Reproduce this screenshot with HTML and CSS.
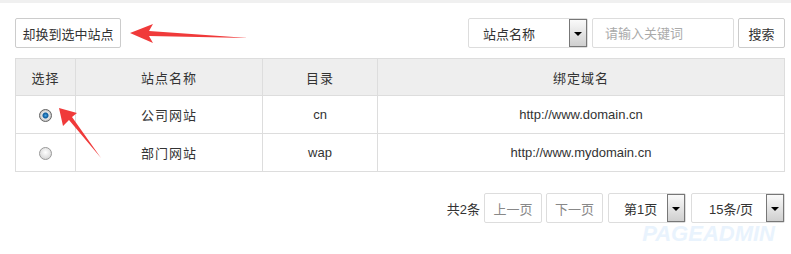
FILE: index.html
```html
<!DOCTYPE html>
<html lang="zh-CN">
<head>
    <meta charset="UTF-8">
    <title>站点管理</title>
    <link rel="stylesheet" href="styles.css">
</head>
<body>
    <div class="page">
        <div class="toolbar">
            <button class="btn btn-switch">却换到选中站点</button>
            <div class="search">
                <div class="select select-field">
                    <span class="select-text">站点名称</span>
                    <span class="select-arrow"></span>
                </div>
                <input class="keyword" type="text" placeholder="请输入关键词">
                <button class="btn btn-search">搜索</button>
            </div>
        </div>

        <table class="site-table">
            <thead>
                <tr>
                    <th class="col-check">选择</th>
                    <th class="col-name">站点名称</th>
                    <th class="col-dir">目录</th>
                    <th>绑定域名</th>
                </tr>
            </thead>
            <tbody>
                <tr>
                    <td><span class="radio checked"></span></td>
                    <td class="cn">公司网站</td>
                    <td>cn</td>
                    <td>http://www.domain.cn</td>
                </tr>
                <tr>
                    <td><span class="radio"></span></td>
                    <td class="cn">部门网站</td>
                    <td>wap</td>
                    <td>http://www.mydomain.cn</td>
                </tr>
            </tbody>
        </table>

        <div class="pager">
            <span class="total">共2条</span>
            <button class="btn btn-page">上一页</button>
            <button class="btn btn-page">下一页</button>
            <div class="select select-page">
                <span class="select-text">第1页</span>
                <span class="select-arrow"></span>
            </div>
            <div class="select select-size">
                <span class="select-text">15条/页</span>
                <span class="select-arrow"></span>
            </div>
        </div>
        <div class="watermark">PAGEADMIN</div>

        <!-- annotation arrows -->
        <svg class="arrow arrow-top" viewBox="0 0 120 26" xmlns="http://www.w3.org/2000/svg">
            <polygon points="0,14 23,5 19,12 118,19 19,17 23,24" fill="#f03a3a"/>
        </svg>
        <svg class="arrow arrow-radio" viewBox="0 0 46 56" xmlns="http://www.w3.org/2000/svg">
            <polygon points="1,1 19,6 14,10 43,51 11,13 5,19" fill="#f03a3a"/>
        </svg>
    </div>
</body>
</html>
```

FILE: styles.css
```css
* {
    box-sizing: border-box;
}
body {
    margin: 0;
    padding: 0;
    font-family: "Liberation Sans", Arial, "Noto Sans CJK SC", sans-serif;
    font-size: 13px;
    color: #333;
    background-color: #fff;
    border-top: 3px solid #f0f0f0;
}
.page {
    position: relative;
    width: 770px;
    margin-left: 15px;
    padding-top: 15px;
}
.toolbar {
    display: flex;
    justify-content: space-between;
    align-items: center;
    height: 30px;
    margin-bottom: 10px;
}
.search {
    display: flex;
    gap: 4px;
}
.btn {
    height: 30px;
    padding: 0 11px;
    border: 1px solid #ccc;
    border-radius: 2px;
    background-color: #fff;
    font-family: inherit;
    font-size: 13px;
    color: #333;
}
.btn-switch {
    width: 106px;
    padding: 0;
}
.btn-search {
    width: 47px;
    padding: 0;
}
.select {
    display: flex;
    align-items: stretch;
    height: 30px;
    border: 1px solid #ddd;
    border-radius: 2px;
    background-color: #fff;
}
.select-text {
    flex: 1;
    display: flex;
    align-items: center;
    padding-left: 14px;
}
.select-arrow {
    position: relative;
    width: 18px;
    border: 1px solid #777;
    background: linear-gradient(#fafafa, #cfcfcf);
}
.select-arrow::after {
    content: "";
    position: absolute;
    left: 4px;
    top: 12px;
    border-left: 4px solid transparent;
    border-right: 4px solid transparent;
    border-top: 4px solid #000;
}
.select-field {
    width: 120px;
}
.keyword {
    width: 142px;
    height: 30px;
    padding: 0 12px;
    border: 1px solid #ddd;
    border-radius: 2px;
    font-family: inherit;
    font-size: 13px;
}
.keyword::placeholder {
    color: #aaa;
}
.site-table {
    width: 100%;
    border-collapse: collapse;
    text-align: center;
}
.site-table th,
.site-table td {
    border: 1px solid #ddd;
    font-weight: normal;
}
.site-table th,
.site-table td.cn {
    letter-spacing: 1px;
}
.site-table th {
    height: 37px;
    background-color: #eee;
}
.site-table td {
    height: 38px;
}
.col-check {
    width: 60px;
}
.col-name {
    width: 187px;
}
.col-dir {
    width: 115px;
}
.radio {
    display: inline-block;
    width: 13px;
    height: 13px;
    margin-top: 4px;
    border: 1px solid #9a9a9a;
    border-radius: 50%;
    background: radial-gradient(circle at 50% 40%, #fff, #ccc);
}
.radio.checked {
    border-color: #666;
    background: radial-gradient(circle, #4aa3e0 0, #0b5a9c 2.5px, #e8e8e8 3.5px, #bbb 6px);
}
.pager {
    display: flex;
    justify-content: flex-end;
    align-items: center;
    gap: 4px;
    margin-top: 21px;
}
.btn-page {
    width: 58px;
    padding: 0;
    border-color: #ddd;
    color: #888;
}
.btn-page + .btn-page {
    width: 57px;
}
.select-page {
    width: 78px;
    margin-left: 1px;
}
.select-page .select-text {
    padding-left: 15px;
}
.select-size {
    width: 94px;
    margin-left: 1px;
}
.select-size .select-text {
    padding-left: 17px;
}
.watermark {
    text-align: right;
    padding-right: 10px;
    font-size: 22px;
    font-weight: bold;
    font-style: italic;
    line-height: 22px;
    color: #e9f3fd;
}
.arrow {
    position: absolute;
}
.arrow-top {
    left: 115px;
    top: 16px;
    width: 120px;
    height: 26px;
}
.arrow-radio {
    left: 43px;
    top: 104px;
    width: 46px;
    height: 56px;
}
```
